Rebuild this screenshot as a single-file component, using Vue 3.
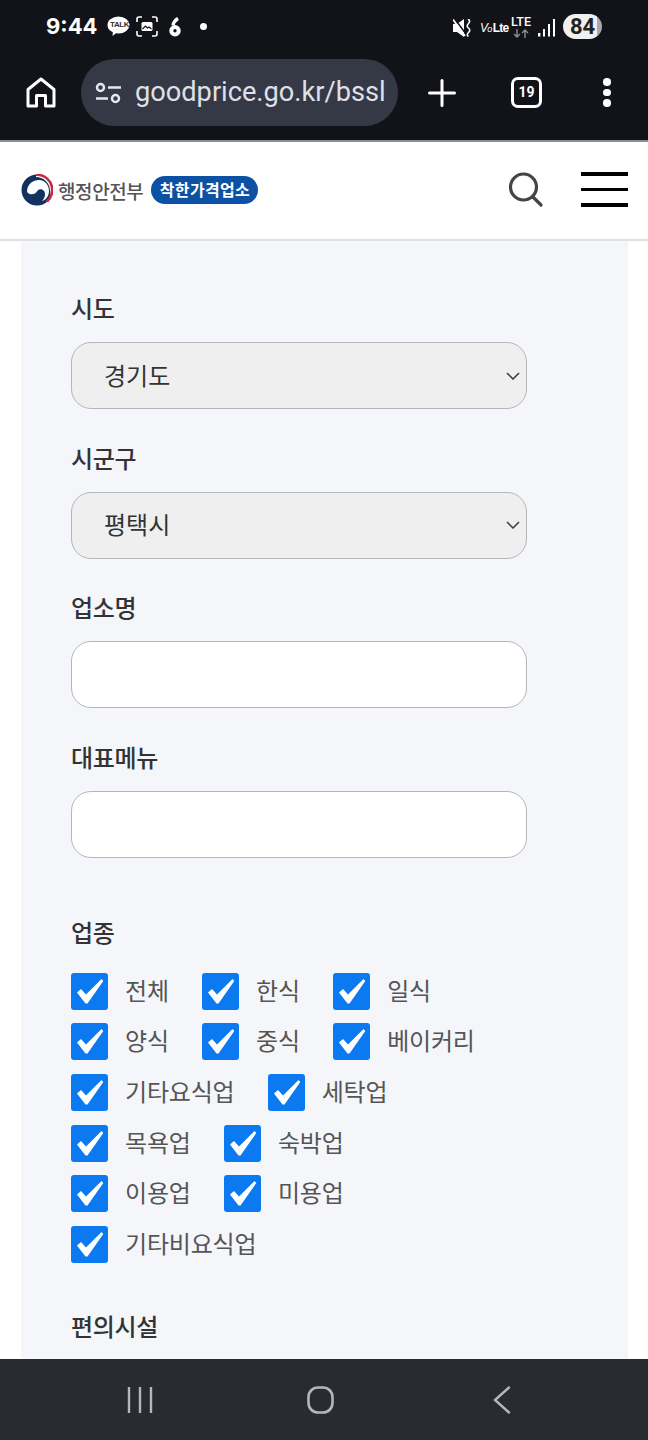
<script setup>
const fields = [
  { label: '시도', value: '경기도', select: true },
  { label: '시군구', value: '평택시', select: true },
  { label: '업소명', value: '' },
  { label: '대표메뉴', value: '' },
]
const rows = [
  ['전체', '한식', '일식'],
  ['양식', '중식', '베이커리'],
  ['기타요식업', '세탁업'],
  ['목욕업', '숙박업'],
  ['이용업', '미용업'],
  ['기타비요식업'],
]
</script>

<template>
  <div class="page">
    <div class="chrome">
      <div class="status">
        <div class="status-left">
          <span class="time">9:44</span>
          <span class="talk"><svg width="23" height="21" viewBox="0 0 23 21"><ellipse cx="11.500" cy="9" rx="11" ry="8.600" fill="#fff"/><path d="M6 15l-.5 5 5-4z" fill="#fff"/></svg><b>TALK</b></span>
          <svg class="gallery" width="22" height="21" viewBox="0 0 22 21" fill="none" stroke="#fff" stroke-width="1.600"><path d="M1 6V3q0-2 2-2h3M16 1h3q2 0 2 2v3M21 15v3q0 2-2 2h-3M6 20H3q-2 0-2-2v-3"/><rect x="5.500" y="6" width="11" height="9" rx="1.500" fill="#fff" stroke="none"/><path d="M6.500 13l3-3 2 2 1.500-1 2.500 2" stroke="#111318" stroke-width="1.200"/></svg>
          <svg class="six" width="12" height="20" viewBox="0 0 12 20" fill="none" stroke="#fff"><circle cx="6" cy="13.800" r="3.700" stroke-width="4"/><path d="M4 8.500C4.500 5.500 6.500 3 9 1.500" stroke-width="3.400"/></svg>
          <span class="dot"></span>
        </div>
        <div class="status-right">
          <svg class="mute" width="19" height="18" viewBox="0 0 19 18"><path d="M0 5h4l7-5v18l-7-5H0z" fill="#fff"/><path d="M1 -1L13 15" stroke="#111318" stroke-width="1.600"/><path d="M0 0.500L12 17" stroke="#fff" stroke-width="1.800"/><path d="M15 0q3 2 .5 4.500t0 4.500 0 4.500 0 4" fill="none" stroke="#fff" stroke-width="1.600"/></svg>
          <span class="volte"><i>V</i><em>o</em><b>Lte</b></span>
          <span class="lte"><span>LTE</span><svg width="16" height="9" viewBox="0 0 16 9" fill="none" stroke="#8b8d92" stroke-width="1.400"><path d="M4 0v8M1 5l3 3 3-3M12 9V1M9 4l3-3 3 3"/></svg></span>
          <svg class="signal" width="17" height="18" viewBox="0 0 17 18" fill="#fff"><rect x="0" y="14" width="2.400" height="3.500"/><rect x="5" y="10" width="2" height="7.500"/><rect x="10" y="5" width="2" height="12.500"/><rect x="15" y="0" width="2" height="17.500"/></svg>
          <span class="battery">84</span>
        </div>
      </div>
      <div class="browser">
        <svg class="home" width="30" height="31" viewBox="0 0 30 31" fill="none" stroke="#fff" stroke-width="3"><path d="M2 29V12.500L15 2l13 10.500V29h-8.500V18.500h-9V29z" stroke-linejoin="round"/></svg>
        <div class="url">
          <svg width="27" height="22" viewBox="0 0 27 22" fill="none" stroke="#e6e7ec" stroke-width="2.500"><circle cx="5.500" cy="5.500" r="3.500"/><path d="M13 5.500h13M1 16.500h12"/><circle cx="20.500" cy="16.500" r="3.500"/></svg>
          <span class="url-text">goodprice.go.kr/bssl</span>
        </div>
        <svg class="plus" width="28" height="28" viewBox="0 0 28 28" stroke="#fff" stroke-width="3" stroke-linecap="round"><path d="M14 1.500v25M1.500 14h25"/></svg>
        <span class="tabs">19</span>
        <span class="more"><i></i><i></i><i></i></span>
      </div>
    </div>

    <header class="site">
      <div class="logo">
        <svg width="32" height="32" viewBox="0 0 32 32" fill="none">
          <circle cx="16" cy="16" r="15.500" fill="#12325f"/>
          <path d="M15 .5A15.500 15.500 0 0 1 31.500 16 15.500 15.500 0 0 1 25 28.500 14 14 0 0 0 29 16 14 14 0 0 0 15 3z" fill="#fff"/>
          <path d="M15 .8A15.200 15.200 0 0 1 31.200 16 15.200 15.200 0 0 1 26 27.500" stroke="#c8283c" stroke-width="2.600"/>
          <path d="M6 18C6 10 12 6 18 6c6 0 10 5 10 11 0 5-3 9-7 10 4-4 4-10 0-11.500-3-1-4 .500-5.500 2.500C13.500 20.500 9 21.500 6 18z" fill="#fff"/>
        </svg>
        <span class="ministry">행정안전부</span>
        <span class="pill">착한가격업소</span>
      </div>
      <div class="actions">
        <svg width="36" height="36" viewBox="0 0 36 36" fill="none" stroke="#444" stroke-width="3.200"><circle cx="15.500" cy="15" r="13"/><path d="M25 25l8 8" stroke-linecap="round"/></svg>
        <span class="burger"><i></i><i></i><i></i></span>
      </div>
    </header>

    <main class="content">
      <section class="card">
        <div v-for="f in fields" :key="f.label" class="field">
          <div class="label">{{ f.label }}</div>
          <div class="control" :class="{ select: f.select }">
            <span class="value">{{ f.value }}</span>
            <svg v-if="f.select" class="chev" width="14" height="8" viewBox="0 0 14 8" fill="none" stroke="#3a3a3a" stroke-width="1.500"><path d="M1 1l6 6 6-6"/></svg>
          </div>
        </div>

        <div class="label type-label">업종</div>
        <div class="checks">
          <div v-for="(row, i) in rows" :key="i" class="check-row">
            <div v-for="c in row" :key="c" class="check">
              <span class="box"><svg width="37" height="37" viewBox="0 0 37 37"><path d="M6 19.500L10 16l5 5.500L30.500 6l1.800 2L16.500 30.500h-2z" fill="#fff"/></svg></span>
              <span class="check-text">{{ c }}</span>
            </div>
          </div>
        </div>

        <div class="label amen-label">편의시설</div>
      </section>
    </main>

    <nav class="nav">
      <svg width="26" height="26" viewBox="0 0 26 26" stroke="#b5b6ba" stroke-width="2.400"><path d="M2 0v26M13 0v26M24 0v26"/></svg>
      <svg width="27" height="28" viewBox="0 0 27 28" fill="none" stroke="#b5b6ba" stroke-width="2.600"><rect x="1.500" y="1.500" width="24" height="25" rx="9.500"/></svg>
      <svg width="18" height="28" viewBox="0 0 18 28" fill="none" stroke="#b5b6ba" stroke-width="2.400" stroke-linecap="round"><path d="M16 1.500L2 14l14 12.500"/></svg>
    </nav>
  </div>
</template>

<style>
html, body { margin: 0; background: #fff; }
</style>

<style scoped>
* { box-sizing: border-box; }
.page {
  width: 648px; height: 1440px; display: flex; flex-direction: column; overflow: hidden;
  font-family: "Noto Sans CJK KR", "Noto Sans", sans-serif; background: #fff;
}
.chrome { height: 142px; background: #111318; border-bottom: 2px solid #8b8d91; flex: none; }
.status { height: 59px; display: flex; justify-content: space-between; align-items: flex-start; padding: 13px 46px 0 46px; }
.status-left, .status-right { display: flex; align-items: center; height: 27px; }
.time { font: 700 22px/27px Inter, Roboto, sans-serif; color: #fff; width: 61px; }
.talk { position: relative; width: 23px; height: 21px; display: block; }
.talk svg { display: block; }
.talk b { position: absolute; left: 3px; top: 4px; font: 700 8px/10px "Liberation Sans", sans-serif; color: #333; letter-spacing: -.4px; }
.gallery { margin-left: 6px; }
.six { margin-left: 11px; }
.dot { width: 7px; height: 7px; border-radius: 50%; background: #fff; margin-left: 19px; }
.mute { margin-right: 8px; margin-top: 2px; }
.volte { color: #fff; font: 700 12px/16px "Liberation Sans", sans-serif; width: 25px; white-space: nowrap; letter-spacing: -.7px; margin-top: 3px; }
.volte i { font-weight: 400; }
.volte em { font-weight: 400; font-size: 9px; margin-right: 1px; }
.lte { display: flex; flex-direction: column; align-items: center; width: 20px; margin-left: 6px; color: #fff; font: 500 12.500px/12px Roboto, sans-serif; }
.lte svg { margin-top: 1px; }
.signal { margin-left: 7px; margin-top: 3px; }
.battery {
  margin-left: 8px; width: 39px; height: 25px; border-radius: 13px;
  background: linear-gradient(90deg, #f0f0f0 0 86%, #a9a9a9 86%); color: #222;
  font: 700 22px/25px Roboto, sans-serif; text-align: center;
}
.browser { height: 67px; display: flex; align-items: center; position: relative; }
.home { margin-left: 26px; flex: none; }
.url {
  margin-left: 25px; width: 317px; height: 67px; border-radius: 34px; background: #353945;
  display: flex; align-items: center; padding-left: 14px; overflow: hidden; flex: none;
}
.url-text { margin-left: 13px; white-space: nowrap; color: #dfe1e8; font: 400 27.200px/69px Roboto, sans-serif; }
.plus { margin-left: 30px; flex: none; }
.tabs {
  margin-left: 55px; width: 31px; height: 31px; border: 3.500px solid #fff; border-radius: 7px; color: #fff; flex: none;
  font: 700 14px/24px Roboto, sans-serif; text-align: center;
}
.more { margin-left: 61px; display: flex; flex-direction: column; gap: 3px; }
.more i { display: block; width: 7.500px; height: 7.500px; border-radius: 50%; background: #fff; }

.site {
  height: 99px; flex: none; display: flex; justify-content: space-between; align-items: center;
  padding: 0 20px 0 21px; background: #fff; border-bottom: 2px solid #e0e0e0;
}
.logo { display: flex; align-items: center; height: 32px; margin-top: -1px; }
.ministry { margin-left: 5px; color: #555; font-size: 19px; font-weight: 500; letter-spacing: -.4px; white-space: nowrap; }
.pill {
  margin-left: 8px; width: 107px; height: 28px; border-radius: 14px; background: #0c51a4; color: #fff;
  font-size: 16px; font-weight: 700; line-height: 26px; text-align: center; white-space: nowrap; letter-spacing: .3px;
}
.actions { display: flex; align-items: center; }
.actions > svg { margin-top: -1px; }
.burger { margin-left: 37px; width: 47px; display: flex; flex-direction: column; gap: 12px; margin-top: -2px; }
.burger i { display: block; height: 3.500px; background: #000; }

.content { flex: 1; min-height: 0; overflow: hidden; padding: 0 20px 0 21px; }
.card { background: #f4f6fa; height: 100%; padding: 49px 50px 0; overflow: hidden; }
.field { height: 149.700px; }
.label { color: #333; font-size: 24px; font-weight: 500; line-height: 36px; letter-spacing: -.3px; height: 36px; }
.control {
  margin-top: 16px; width: 456px; height: 67px; border: 1.500px solid #b5b6b8; border-radius: 20px; background: #fff;
  display: flex; align-items: center; justify-content: space-between; padding: 0 6px 0 32px;
  color: #333; font-size: 24px;
}
.value { line-height: 34px; height: 34px; margin-top: -2px; }
.select { background: #efefef; }
.type-label { margin-top: 25px; }
.checks { margin-top: 23px; }
.check-row { display: flex; height: 50.600px; }
.check { display: flex; align-items: flex-start; margin-right: 33.300px; }
.box {
  width: 37px; height: 37px; border-radius: 3px; background: #0b7af0; display: block;
}
.box svg { display: block; }
.check-text { margin-left: 17px; color: #555; font-size: 24px; line-height: 34px; letter-spacing: -.2px; white-space: nowrap; }
.amen-label { margin-top: 32px; }

.nav {
  height: 81px; flex: none; background: #2a2b30; display: flex; align-items: center; position: relative;
  padding: 0 0 0 127px;
}
.nav svg:nth-child(2) { margin-left: 154px; }
.nav svg:nth-child(3) { margin-left: 159px; }
</style>
